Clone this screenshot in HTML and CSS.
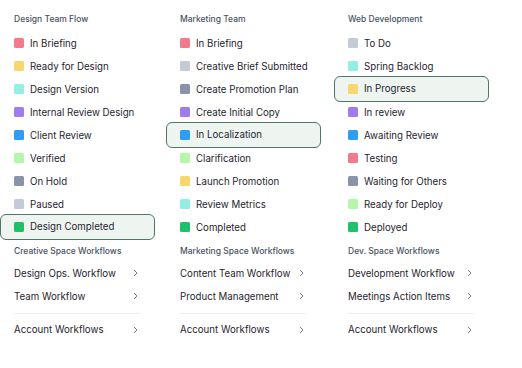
FILE: index.html
```html
<!DOCTYPE html>
<html lang="en">
<head>
  <meta charset="UTF-8">
  <meta name="viewport" content="width=device-width, initial-scale=1.0">
  <title>Workflows</title>
  <link rel="stylesheet" href="styles.css">
</head>
<body>
  <div class="board">

    <div class="column">
      <h2>Design Team Flow</h2>
      <ul class="states">
        <li><span class="dot red"></span>In Briefing</li>
        <li><span class="dot yellow"></span>Ready for Design</li>
        <li><span class="dot cyan"></span>Design Version</li>
        <li><span class="dot purple"></span>Internal Review Design</li>
        <li><span class="dot blue"></span>Client Review</li>
        <li><span class="dot lime"></span>Verified</li>
        <li><span class="dot slate"></span>On Hold</li>
        <li><span class="dot silver"></span>Paused</li>
        <li class="active"><span class="dot green"></span>Design Completed</li>
      </ul>
      <h3>Creative Space Workflows</h3>
      <ul class="links">
        <li>Design Ops. Workflow<svg class="chev" viewBox="0 0 5 8"><path d="M1 1l3 3-3 3"/></svg></li>
        <li>Team Workflow<svg class="chev" viewBox="0 0 5 8"><path d="M1 1l3 3-3 3"/></svg></li>
        <li class="sep"></li>
        <li>Account Workflows<svg class="chev" viewBox="0 0 5 8"><path d="M1 1l3 3-3 3"/></svg></li>
      </ul>
    </div>

    <div class="column">
      <h2>Marketing Team</h2>
      <ul class="states">
        <li><span class="dot red"></span>In Briefing</li>
        <li><span class="dot silver"></span>Creative Brief Submitted</li>
        <li><span class="dot slate"></span>Create Promotion Plan</li>
        <li><span class="dot purple"></span>Create Initial Copy</li>
        <li class="active"><span class="dot blue"></span>In Localization</li>
        <li><span class="dot lime"></span>Clarification</li>
        <li><span class="dot yellow"></span>Launch Promotion</li>
        <li><span class="dot cyan"></span>Review Metrics</li>
        <li><span class="dot green"></span>Completed</li>
      </ul>
      <h3>Marketing Space Workflows</h3>
      <ul class="links">
        <li>Content Team Workflow<svg class="chev" viewBox="0 0 5 8"><path d="M1 1l3 3-3 3"/></svg></li>
        <li>Product Management<svg class="chev" viewBox="0 0 5 8"><path d="M1 1l3 3-3 3"/></svg></li>
        <li class="sep"></li>
        <li>Account Workflows<svg class="chev" viewBox="0 0 5 8"><path d="M1 1l3 3-3 3"/></svg></li>
      </ul>
    </div>

    <div class="column">
      <h2>Web Development</h2>
      <ul class="states">
        <li><span class="dot silver"></span>To Do</li>
        <li><span class="dot cyan"></span>Spring Backlog</li>
        <li class="active"><span class="dot yellow"></span>In Progress</li>
        <li><span class="dot purple"></span>In review</li>
        <li><span class="dot blue"></span>Awaiting Review</li>
        <li><span class="dot red"></span>Testing</li>
        <li><span class="dot slate"></span>Waiting for Others</li>
        <li><span class="dot lime"></span>Ready for Deploy</li>
        <li><span class="dot green"></span>Deployed</li>
      </ul>
      <h3>Dev. Space Workflows</h3>
      <ul class="links">
        <li>Development Workflow<svg class="chev" viewBox="0 0 5 8"><path d="M1 1l3 3-3 3"/></svg></li>
        <li>Meetings Action Items<svg class="chev" viewBox="0 0 5 8"><path d="M1 1l3 3-3 3"/></svg></li>
        <li class="sep"></li>
        <li>Account Workflows<svg class="chev" viewBox="0 0 5 8"><path d="M1 1l3 3-3 3"/></svg></li>
      </ul>
    </div>

  </div>
</body>
</html>
```

FILE: styles.css
```css
:root {
  --text: #1f2430;
  --muted: #4a5264;
  --line: #ebedf0;
  --hl-bg: #eef5f1;
  --hl-border: #4e7767;
}
*, *::before, *::after { box-sizing: border-box; margin: 0; padding: 0; }
body {
  font-family: Inter, "Noto Sans", sans-serif;
  background: #fff;
  color: var(--text);
}
.board {
  display: grid;
  grid-template-columns: 166px 168px 160px;
  padding: 12px 0 0 14px;
}
h2, h3 {
  font-size: 8.5px;
  font-weight: 500;
  line-height: 14px;
  color: var(--muted);
}
h2 { margin-bottom: 5.5px; }
h3 { margin: 5.5px 0 3.5px; }
ul { list-style: none; }
.states li {
  display: flex;
  align-items: center;
  height: 23px;
  font-size: 9.7px;
  white-space: nowrap;
}
.states li.active {
  height: 26px;
  width: 155px;
  margin: -2px 0 -1px -14px;
  padding-left: 13px;
  border: 1px solid var(--hl-border);
  border-radius: 6px;
  background: var(--hl-bg);
}
.dot {
  width: 10px;
  height: 10px;
  border-radius: 1.5px;
  margin-right: 6px;
  flex-shrink: 0;
}
.red { background: #f27a8b; }
.yellow { background: #fad66e; }
.cyan { background: #92efe2; }
.purple { background: #a07cf0; }
.blue { background: #2f9df2; }
.lime { background: #b6f6aa; }
.slate { background: #8b93a8; }
.silver { background: #c5cad7; }
.green { background: #1fc16b; }
.links li {
  display: flex;
  align-items: center;
  justify-content: space-between;
  width: 126px;
  height: 23px;
  font-size: 9.7px;
  white-space: nowrap;
}
.links li.sep {
  height: 1px;
  background: var(--line);
  margin: 5px 0 4.5px;
}
.chev {
  width: 5px;
  height: 8px;
  margin-right: 2px;
  fill: none;
  stroke: #777c86;
  stroke-width: 1;
}
```
